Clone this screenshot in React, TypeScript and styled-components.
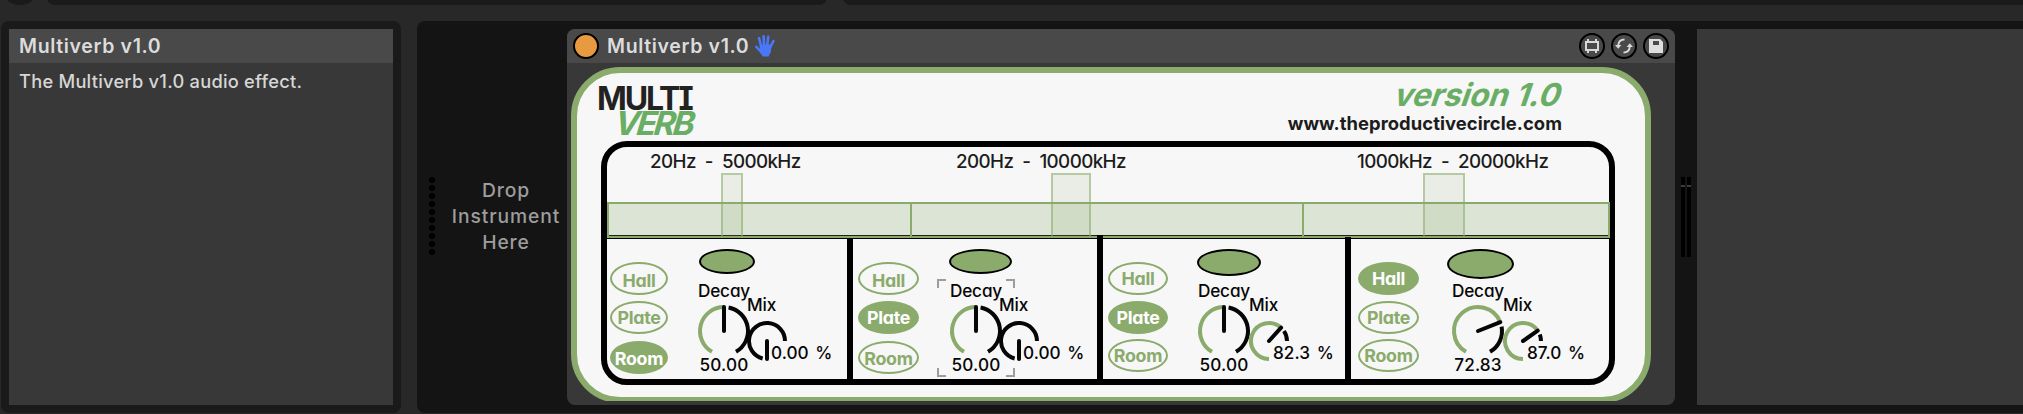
import React from 'react';
import styled, { createGlobalStyle, css } from 'styled-components';

const green = '#8aab6c';
const paper = '#f7f7f7';

const GlobalStyle = createGlobalStyle`
  * { box-sizing: border-box; }
  body { margin: 0; background: #282828; font-family: Inter, "Liberation Sans", sans-serif; overflow: hidden; }
`;

const Window = styled.div`
  display: flex;
  flex-direction: column;
  width: 2023px;
  height: 414px;
  background: #282828;
  overflow: hidden;
`;

const UpperStrip = styled.div`
  display: flex;
  height: 5px;
  flex: none;
  overflow: hidden;
`;

const StripKnob = styled.div`
  width: 40px;
  height: 40px;
  margin: -35px 7px 0 0;
  border-radius: 50%;
  background: #1a1a1a;
  flex: none;
`;

const StripPane = styled.div<{ $width?: number }>`
  height: 20px;
  margin: -15px 16px 0 0;
  border-radius: 8px;
  background: #1a1a1a;
  ${(p) => (p.$width ? css`width: ${p.$width}px; flex: none;` : css`flex: 1; margin-right: -20px;`)}
`;

const Lower = styled.div`
  display: flex;
  gap: 16px;
  margin-top: 16px;
  padding-left: 1px;
  height: 392px;
`;

const InfoPane = styled.section`
  width: 400px;
  flex: none;
  padding: 8px;
  border-radius: 8px;
  background: #1a1a1a;
`;

const InfoBody = styled.div`
  height: 376px;
  background: #383838;
`;

const InfoTitle = styled.h2`
  margin: 0;
  height: 34px;
  padding-left: 10px;
  background: #494949;
  color: #dcdcdc;
  font-size: 19.5px;
  font-weight: 600;
  letter-spacing: 0.65px;
  line-height: 35px;
`;

const InfoText = styled.p`
  margin: 0;
  padding: 6px 10px;
  color: #d6d6d6;
  font-size: 18.3px;
  font-weight: 500;
  letter-spacing: 0.23px;
  line-height: 24px;
`;

const Chain = styled.section`
  display: flex;
  flex: 1;
  padding: 8px 0;
  border-radius: 8px 0 0 8px;
  background: #141414;
`;

const DropZone = styled.div`
  display: flex;
  align-items: flex-start;
  width: 150px;
  flex: none;
  padding: 148px 0 0 12px;
`;

const Grip = styled.div`
  display: flex;
  flex-direction: column;
  gap: 2px;
`;

const GripDot = styled.i`
  width: 6px;
  height: 6px;
  border-radius: 50%;
  background: #000;
`;

const DropText = styled.div`
  width: 110px;
  margin: 0 0 0 16px;
  color: #9d9d9d;
  font-size: 19.3px;
  font-weight: 500;
  letter-spacing: 0.9px;
  line-height: 26px;
  text-align: center;
`;

const Device = styled.article`
  width: 1108px;
  height: 376px;
  flex: none;
  border-radius: 8px;
  background: #383838;
  overflow: hidden;
`;

const DeviceHeader = styled.header`
  display: flex;
  align-items: center;
  height: 34px;
  padding: 0 6px;
  background: #494949;
`;

const PowerButton = styled.span`
  width: 26px;
  height: 26px;
  border: 2px solid #000;
  border-radius: 50%;
  background: #e79a40;
`;

const DeviceTitle = styled.span`
  margin: 0 6px 0 8px;
  color: #dcdcdc;
  font-size: 19.5px;
  font-weight: 600;
  letter-spacing: 0.65px;
  line-height: 35px;
  flex: none;
`;

const HeaderTools = styled.div`
  display: flex;
  gap: 6px;
  margin-left: auto;
`;

const ToolButton = styled.span`
  display: flex;
  align-items: center;
  justify-content: center;
  width: 26px;
  height: 26px;
  border: 2px solid #000;
  border-radius: 50%;
`;

const Viewport = styled.div`
  height: 334px;
  margin: 4px 24px 0 4px;
  overflow: hidden;
`;

const Panel = styled.div`
  height: 336px;
  padding: 0 30px 0 24px;
  border: 6px solid ${green};
  border-radius: 49px;
  background: ${paper};
`;

const PanelHeader = styled.div`
  display: flex;
  justify-content: space-between;
  height: 68px;
`;

const Logo = styled.div`
  margin-left: -4px;
  padding-top: 14px;
`;

const LogoTop = styled.div`
  color: #222;
  font-size: 32px;
  font-weight: 700;
  letter-spacing: -2.1px;
  line-height: 24px;
  font-feature-settings: "cv08";
`;

const LogoBottom = styled.div`
  margin-left: 15px;
  color: #6aae66;
  font-size: 33px;
  font-weight: 700;
  letter-spacing: -2.7px;
  line-height: 25px;
  transform: skewX(-16deg);
  transform-origin: 0 100%;
`;

const Credits = styled.div`
  display: flex;
  flex-direction: column;
  align-items: flex-end;
  padding: 6px 53px 0 0;
  font-feature-settings: "cv11";
`;

const Version = styled.div`
  color: #6aae66;
  font-size: 31.5px;
  font-weight: 700;
  letter-spacing: -0.1px;
  line-height: 32px;
  transform: skewX(-19deg);
`;

const Site = styled.div`
  color: #1c1c1c;
  font-size: 18.4px;
  font-weight: 700;
  letter-spacing: 0.06px;
  line-height: 24px;
`;

const Frame = styled.div`
  width: 1014px;
  height: 244px;
  border: 6px solid #000;
  border-radius: 26px;
`;

const Bands = styled.div`
  display: flex;
  height: 91px;
`;

const Band = styled.div<{ $width: number }>`
  position: relative;
  display: flex;
  flex-direction: column;
  justify-content: space-between;
  flex: none;
  width: ${(p) => p.$width}px;
`;

const BandLabel = styled.div<{ $indent: number }>`
  padding: 2px 0 0 ${(p) => p.$indent}px;
  color: #1c1c1c;
  font-size: 18.8px;
  font-weight: 500;
  letter-spacing: -0.6px;
  word-spacing: 4.6px;
  line-height: 25px;
  white-space: nowrap;
`;

const BandStrip = styled.div<{ $last?: boolean }>`
  height: 36px;
  border: solid ${green};
  border-width: 2px ${(p) => (p.$last ? 2 : 0)}px 2px 2px;
  background: #dce4d5;
  box-shadow: inset 0 -1px #1c2614;
`;

const BandHandle = styled.div<{ $left: number; $width: number }>`
  position: absolute;
  left: ${(p) => p.$left}px;
  bottom: 2px;
  width: ${(p) => p.$width}px;
  height: 63px;
  border: 2px solid rgba(138, 171, 108, 0.55);
  border-bottom: 0;
  background: rgba(138, 171, 108, 0.13);
`;

const Voices = styled.div`
  display: flex;
  height: 141px;
  border-top: 1px solid #000;
`;

const Divider = styled.div<{ $rise: number }>`
  position: relative;
  width: 6px;
  flex: none;
  margin-top: -${(p) => p.$rise}px;
  background: #000;
`;

const VoiceCell = styled.div<{ $width: number; $inset: number }>`
  display: flex;
  flex: none;
  width: ${(p) => p.$width}px;
  padding-left: ${(p) => p.$inset}px;
`;

const Modes = styled.div<{ $width: number; $gap: number }>`
  display: flex;
  flex-direction: column;
  flex: none;
  gap: ${(p) => p.$gap}px;
  width: ${(p) => p.$width}px;
  padding-top: 23px;
`;

const Mode = styled.div<{ $on: boolean; $drop: number }>`
  display: flex;
  align-items: center;
  justify-content: center;
  height: 33px;
  flex: none;
  padding-top: ${(p) => p.$drop}px;
  border: 2px solid ${green};
  border-radius: 50%;
  background: ${(p) => (p.$on ? green : paper)};
  color: ${(p) => (p.$on ? '#fff' : green)};
  font-size: 17.8px;
  font-weight: 700;
  letter-spacing: -0.25px;
  font-feature-settings: "cv11";
`;

const Controls = styled.div<{ $indent: number }>`
  margin-left: ${(p) => p.$indent}px;
  padding-top: 10px;
`;

const LampRow = styled.div`
  height: 33px;
`;

const Lamp = styled.div<{ $w: number; $h: number; $shift: number }>`
  width: ${(p) => p.$w}px;
  height: ${(p) => p.$h}px;
  margin-left: ${(p) => p.$shift}px;
  border: 2px solid #000;
  border-radius: 50%;
  background: ${green};
`;

const Knobs = styled.div<{ $gap: number }>`
  display: flex;
  & > :last-child { margin-left: ${(p) => p.$gap}px; }
`;

const Knob = styled.div`
  position: relative;
  display: flex;
  flex-direction: column;
  align-items: center;
  width: 52px;
  height: 97px;
  color: #060606;
  font-size: 17.2px;
  font-weight: 500;
  line-height: 18px;
  white-space: nowrap;
  font-feature-settings: "cv11";
`;

const MixKnob = styled(Knob)`
  width: 40px;
  padding-top: 14px;
  align-items: flex-start;
`;

const KnobLabel = styled.span<{ $space: number }>`
  margin-bottom: ${(p) => p.$space}px;
  letter-spacing: -0.15px;
`;

const DialSvg = styled.svg`
  display: block;
  flex: none;
  overflow: visible;
`;

const DecayValue = styled.span`
  margin-top: -1px;
  letter-spacing: 0.15px;
`;

const MixValue = styled.span`
  margin: -17px 0 0 24px;
  word-spacing: 2.2px;
`;

const Focus = styled.svg`
  position: absolute;
  left: -13px;
  top: -3px;
  width: 78px;
  height: 98px;
`;

const MeterGap = styled.div`
  display: flex;
  gap: 2px;
  width: 22px;
  flex: none;
  padding: 148px 0 0 6px;
`;

const Meter = styled.i`
  width: 4px;
  height: 80px;
  background: linear-gradient(#000 8px, #3c3c3c 8px, #3c3c3c 10px, #000 10px);
`;

const EmptyArea = styled.div`
  flex: 1;
  background: #383838;
`;

const point = (c: number, r: number, deg: number) => {
  const a = (deg * Math.PI) / 180;
  return `${(c + r * Math.sin(a)).toFixed(2)} ${(c - r * Math.cos(a)).toFixed(2)}`;
};

const arc = (c: number, r: number, from: number, to: number) =>
  `M${point(c, r, from)}A${r} ${r} 0 ${to - from > 180 ? 1 : 0} 1 ${point(c, r, to)}`;

interface DialProps { size: number; start: number; end: number; value: number; skip: number }

function Dial({ size, start, end, value, skip }: DialProps) {
  const c = size / 2;
  const r = c - 2;
  const angle = start + ((end - start) * value) / 100;
  return (
    <DialSvg width={size} height={size} fill="none" strokeWidth="4">
      {angle + skip < end && <path d={arc(c, r, angle + skip, end)} stroke="#060606" />}
      {value > 0 && <path d={arc(c, r, start, angle)} stroke={green} />}
      <path d={`M${c} ${c}L${point(c, r, angle)}`} stroke="#060606" strokeLinecap="round" />
    </DialSvg>
  );
}

function HandIcon() {
  return (
    <svg width="20" height="22" viewBox="0 0 20 22" fill="#4a76f8" stroke="#4a76f8" strokeLinecap="round">
      <path d="M4.6 9.5L16.8 9.5L15.8 17L13.6 21.6H8L5 17.4Z" stroke="none" />
      <path d="M6.4 12L4 3.2M9.2 11L8.6 1.4M12.2 11L13.2 1.8M15.4 12L18.4 6.2" strokeWidth="2.6" />
      <path d="M7 18L1.4 11.8" strokeWidth="2.6" />
    </svg>
  );
}

function FrameIcon() {
  return (
    <svg width="14" height="14" viewBox="0 0 14 14" fill="none" stroke="#d8d8d8" strokeWidth="2">
      <path d="M1 3H13V11H1ZM3 0V3M11 0V3M3 11V14M11 11V14" />
    </svg>
  );
}

function SwapIcon() {
  return (
    <svg width="18" height="16" viewBox="0 0 18 16" fill="none" stroke="#d8d8d8" strokeWidth="2">
      <path d="M9.5 1.5C6 1.5 3.5 3.8 3.2 7.5M8.5 14.5C12 14.5 14.5 12.2 14.8 8.5" />
      <path d="M0 7H6.4L3.2 10.8ZM11.6 9H18L14.8 5.2Z" fill="#d8d8d8" stroke="none" />
    </svg>
  );
}

function SaveIcon() {
  return (
    <svg width="14" height="14" viewBox="0 0 14 14" fill="#dedede" fillRule="evenodd">
      <path d="M0 0H11L14 3V14H0ZM4 2V6H10V2Z" />
    </svg>
  );
}

const bands = [
  { label: '20Hz - 5000kHz', width: 303, indent: 43, left: 114, handle: 22 },
  { label: '200Hz - 10000kHz', width: 392, indent: 46, left: 141, handle: 40 },
  { label: '1000kHz - 20000kHz', width: 308, indent: 55, left: 121, handle: 42 },
];

const modes = ['Hall', 'Plate', 'Room'];

const voices = [
  { width: 240, inset: 3, modeW: 58, gap: 6.4, drop: 3, mode: 'Room', indent: 30, lamp: [56, 25, 1], knobGap: -3, decay: 50, mix: 0, mixText: '0.00 %', focus: false, rise: 0 },
  { width: 244, inset: 5, modeW: 61, gap: 6.4, drop: 3, mode: 'Plate', indent: 31, lamp: [63, 25, -1], knobGap: -3, decay: 50, mix: 0, mixText: '0.00 %', focus: true, rise: 0 },
  { width: 242, inset: 5, modeW: 60, gap: 5.5, drop: 0, mode: 'Plate', indent: 30, lamp: [64, 27, -1], knobGap: -1, decay: 50, mix: 82.3, mixText: '82.3 %', focus: false, rise: 4 },
  { width: 258, inset: 7, modeW: 61, gap: 5.5, drop: 0, mode: 'Hall', indent: 33, lamp: [67, 30, -5], knobGap: -1, decay: 72.83, mix: 87, mixText: '87.0 %', focus: false, rise: 2 },
];

export default function App() {
  return (
    <Window>
      <GlobalStyle />
      <UpperStrip>
        <StripKnob />
        <StripPane $width={780} />
        <StripPane />
      </UpperStrip>
      <Lower>
        <InfoPane>
          <InfoBody>
            <InfoTitle>Multiverb v1.0</InfoTitle>
            <InfoText>The Multiverb v1.0 audio effect.</InfoText>
          </InfoBody>
        </InfoPane>
        <Chain>
          <DropZone>
            <Grip>{Array.from({ length: 10 }, (_, i) => <GripDot key={i} />)}</Grip>
            <DropText>Drop<br />Instrument<br />Here</DropText>
          </DropZone>
          <Device>
            <DeviceHeader>
              <PowerButton />
              <DeviceTitle>Multiverb v1.0</DeviceTitle>
              <HandIcon />
              <HeaderTools>
                <ToolButton><FrameIcon /></ToolButton>
                <ToolButton><SwapIcon /></ToolButton>
                <ToolButton><SaveIcon /></ToolButton>
              </HeaderTools>
            </DeviceHeader>
            <Viewport>
              <Panel>
                <PanelHeader>
                  <Logo>
                    <LogoTop>MULTI</LogoTop>
                    <LogoBottom>VERB</LogoBottom>
                  </Logo>
                  <Credits>
                    <Version>version 1.0</Version>
                    <Site>www.theproductivecircle.com</Site>
                  </Credits>
                </PanelHeader>
                <Frame>
                  <Bands>
                    {bands.map((b, i) => (
                      <Band key={b.label} $width={b.width}>
                        <BandLabel $indent={b.indent}>{b.label}</BandLabel>
                        <BandStrip $last={i === bands.length - 1} />
                        <BandHandle $left={b.left} $width={b.handle} />
                      </Band>
                    ))}
                  </Bands>
                  <Voices>
                    {voices.map((v, i) => (
                      <React.Fragment key={i}>
                        {i > 0 && <Divider $rise={v.rise} />}
                        <VoiceCell $width={v.width} $inset={v.inset}>
                          <Modes $width={v.modeW} $gap={v.gap}>
                            {modes.map((m) => (
                              <Mode key={m} $on={m === v.mode} $drop={m === 'Plate' ? 0 : v.drop}>{m}</Mode>
                            ))}
                          </Modes>
                          <Controls $indent={v.indent}>
                            <LampRow><Lamp $w={v.lamp[0]} $h={v.lamp[1]} $shift={v.lamp[2]} /></LampRow>
                            <Knobs $gap={v.knobGap}>
                              <Knob>
                                <KnobLabel $space={5}>Decay</KnobLabel>
                                <Dial size={52} start={-150} end={150} value={v.decay} skip={11} />
                                <DecayValue>{v.decay.toFixed(2)}</DecayValue>
                                {v.focus && (
                                  <Focus viewBox="0 0 78 98" fill="none" stroke="#9c9c9c" strokeWidth="2">
                                    <path d="M1 9V1H9M69 1H77V9M77 89V97H69M9 97H1V89" />
                                  </Focus>
                                )}
                              </Knob>
                              <MixKnob>
                                <KnobLabel $space={7}>Mix</KnobLabel>
                                <Dial size={40} start={-180} end={90} value={v.mix} skip={14} />
                                <MixValue>{v.mixText}</MixValue>
                              </MixKnob>
                            </Knobs>
                          </Controls>
                        </VoiceCell>
                      </React.Fragment>
                    ))}
                  </Voices>
                </Frame>
              </Panel>
            </Viewport>
          </Device>
          <MeterGap><Meter /><Meter /></MeterGap>
          <EmptyArea />
        </Chain>
      </Lower>
    </Window>
  );
}
